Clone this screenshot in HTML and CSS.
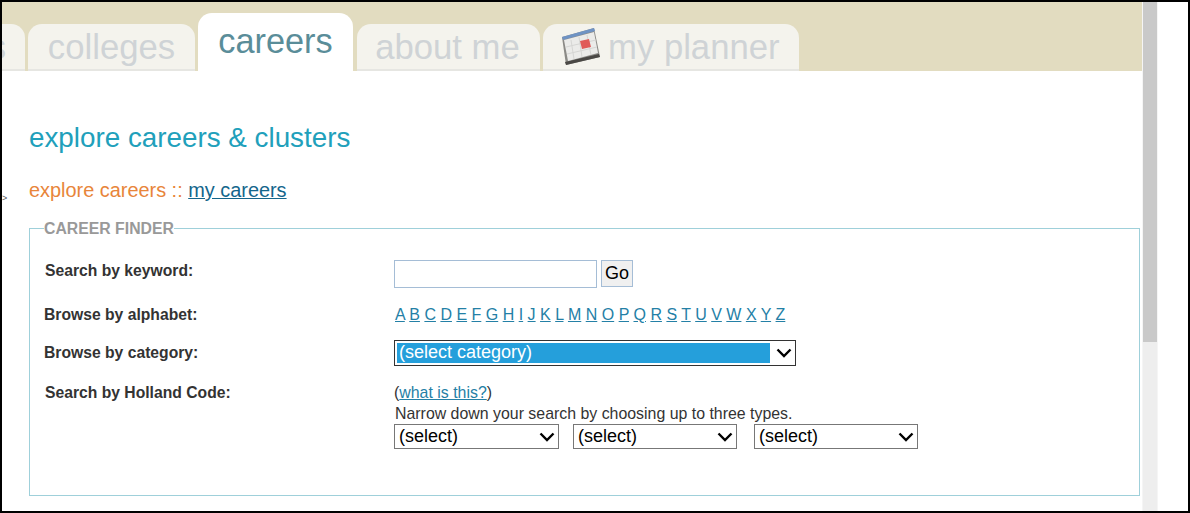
FILE: index.html
```html
<!DOCTYPE html>
<html lang="en">
<head>
    <meta charset="UTF-8">
    <meta name="viewport" content="width=device-width, initial-scale=1.0">
    <title>Explore Careers &amp; Clusters</title>
    <link rel="stylesheet" href="styles.css">
</head>
<body>
    <div class="page">
        <header class="tabbar">
            <a class="tab tab-cut" href="#"><span>s</span></a>
            <a class="tab tab-colleges" href="#">colleges</a>
            <a class="tab tab-active" href="#">careers</a>
            <a class="tab tab-about" href="#">about me</a>
            <a class="tab tab-planner" href="#">
                <svg class="planner-icon" width="40" height="38" viewBox="0 0 40 38">
                    <polygon points="1,9 33,0 39,29 5,37" fill="#8b8a86"/>
                    <polygon points="4,34 38,26 39,29 5,37" fill="#4a4845"/>
                    <polygon points="1,9 33,0 34,3 2,12" fill="#6f93c4"/>
                    <polygon points="3,12 33,4 37,25 7,33" fill="#ebebe9"/>
                    <path d="M10 12 L13 31 M18 9 L21 29 M26 7 L30 27 M5 19 L35 12 M6 26 L36 19" stroke="#d6d6d4" stroke-width="1" fill="none"/>
                    <polygon points="19,13 28,11 30,19 21,21" fill="#e05a58"/>
                </svg>
                my planner
            </a>
        </header>

        <main class="content">
            <h1 class="page-title">explore careers &amp; clusters</h1>
            <p class="subnav"><span class="subnav-current">explore careers :: </span><a href="#">my careers</a></p>
            <span class="stray">&gt;</span>

            <fieldset class="finder">
                <legend>CAREER FINDER</legend>

                <div class="row row-keyword">
                    <label class="row-label nudge">Search by keyword:</label>
                    <div class="keyword-controls">
                        <input type="text" class="keyword-input">
                        <button type="button" class="go-btn">Go</button>
                    </div>
                </div>

                <div class="row row-alpha">
                    <label class="row-label">Browse by alphabet:</label>
                    <div class="alphabet">
                        <a href="#">A</a> <a href="#">B</a> <a href="#">C</a> <a href="#">D</a> <a href="#">E</a> <a href="#">F</a> <a href="#">G</a> <a href="#">H</a> <a href="#">I</a> <a href="#">J</a> <a href="#">K</a> <a href="#">L</a> <a href="#">M</a> <a href="#">N</a> <a href="#">O</a> <a href="#">P</a> <a href="#">Q</a> <a href="#">R</a> <a href="#">S</a> <a href="#">T</a> <a href="#">U</a> <a href="#">V</a> <a href="#">W</a> <a href="#">X</a> <a href="#">Y</a> <a href="#">Z</a>
                    </div>
                </div>

                <div class="row row-category">
                    <label class="row-label">Browse by category:</label>
                    <div class="select-box select-category">
                        <span class="select-value">(select category)</span>
                        <svg class="chevron" width="16" height="10" viewBox="0 0 16 10"><path d="M1.5 1.5 L8 8 L14.5 1.5" fill="none" stroke="#000" stroke-width="2.4"/></svg>
                    </div>
                </div>

                <div class="row row-holland">
                    <label class="row-label nudge">Search by Holland Code:</label>
                    <div class="holland">
                        <div class="holland-help">(<a href="#">what is this?</a>)</div>
                        <div class="holland-note">Narrow down your search by choosing up to three types.</div>
                        <div class="holland-selects">
                            <div class="select-box select-small">
                                <span class="select-value">(select)</span>
                                <svg class="chevron" width="16" height="10" viewBox="0 0 16 10"><path d="M1.5 1.5 L8 8 L14.5 1.5" fill="none" stroke="#000" stroke-width="2.4"/></svg>
                            </div>
                            <div class="select-box select-small">
                                <span class="select-value">(select)</span>
                                <svg class="chevron" width="16" height="10" viewBox="0 0 16 10"><path d="M1.5 1.5 L8 8 L14.5 1.5" fill="none" stroke="#000" stroke-width="2.4"/></svg>
                            </div>
                            <div class="select-box select-small">
                                <span class="select-value">(select)</span>
                                <svg class="chevron" width="16" height="10" viewBox="0 0 16 10"><path d="M1.5 1.5 L8 8 L14.5 1.5" fill="none" stroke="#000" stroke-width="2.4"/></svg>
                            </div>
                        </div>
                    </div>
                </div>
            </fieldset>
        </main>

        <div class="scrollbar"><div class="scroll-thumb"></div></div>
        <div class="page-edge"></div>
    </div>
</body>
</html>
```

FILE: styles.css
```css
html, body {
    margin: 0;
    padding: 0;
    height: 100%;
}
body {
    font-family: "Liberation Sans", Arial, sans-serif;
    background: #fff;
    overflow: hidden;
}
.page {
    box-sizing: border-box;
    width: 1190px;
    height: 513px;
    border: 2px solid #000;
    display: grid;
    grid-template-columns: 1140px 16px 1fr;
    grid-template-rows: 69px 1fr;
    overflow: hidden;
}

/* tabs */
.tabbar {
    grid-column: 1;
    grid-row: 1;
    background: #e2dcc0;
    display: flex;
    align-items: flex-end;
    overflow: hidden;
}
.tab {
    box-sizing: border-box;
    height: 47px;
    margin-right: 3px;
    border-radius: 14px 14px 0 0;
    border-bottom: 2px solid #e6e6e2;
    background: #f4f3ed;
    color: #cfd3d6;
    font-size: 34.7px;
    line-height: 46px;
    text-align: center;
    text-decoration: none;
    white-space: nowrap;
}
.tab-cut {
    width: 23px;
    display: flex;
    justify-content: flex-end;
    overflow: hidden;
    border-radius: 0 14px 0 0;
    padding-right: 19px;
}
.tab-cut span {
    flex: none;
}
.tab-colleges {
    width: 167px;
}
.tab-active {
    width: 155px;
    height: 58px;
    margin-right: 4px;
    border-bottom: 0;
    background: #fff;
    color: #5a8d99;
    font-size: 34.3px;
    line-height: 56px;
}
.tab-about {
    width: 183px;
    padding-right: 2px;
}
.tab-planner {
    width: 256px;
    display: flex;
    align-items: center;
    padding-left: 18px;
    gap: 7px;
}
.planner-icon {
    flex: none;
    filter: blur(0.5px);
    margin-top: 1px;
}

/* content */
.content {
    grid-column: 1;
    grid-row: 2;
    position: relative;
    padding: 0 2px 0 27px;
}
.page-title {
    margin: 51px 0 0;
    font-size: 27.8px;
    line-height: 32px;
    font-weight: normal;
    color: #21a0bb;
}
.subnav {
    margin: 25px 0 0;
    font-size: 19.9px;
    line-height: 22px;
}
.subnav-current {
    color: #e8853a;
}
.subnav a {
    color: #14668c;
}
.stray {
    position: absolute;
    left: 0;
    top: 122px;
    font-size: 9px;
    color: #555;
}
.finder {
    box-sizing: border-box;
    height: 278px;
    margin: 17px 0 0;
    padding: 0 14px;
    border: 1px solid #9fd0da;
    min-width: 0;
}
.finder legend {
    padding: 2px 0 0;
    font-size: 15.8px;
    line-height: 18px;
    font-weight: bold;
    color: #999;
}

/* rows */
.row {
    display: grid;
    grid-template-columns: 350px 1fr;
    color: #333;
}
.row-label {
    font-size: 15.7px;
    font-weight: bold;
    line-height: 18px;
}
.nudge {
    padding-left: 1px;
}
.row-keyword {
    margin-top: 22px;
    height: 46px;
}
.row-keyword .row-label {
    padding-top: 2px;
}
.keyword-controls {
    display: flex;
    align-items: flex-start;
    gap: 4px;
}
.keyword-input {
    box-sizing: border-box;
    width: 203px;
    height: 28px;
    margin: 0;
    border: 1px solid #a5bdd6;
    background: #fff;
}
.go-btn {
    box-sizing: border-box;
    width: 32px;
    height: 27px;
    padding: 0;
    border: 1px solid #a5bdd6;
    background: #f0f0f0;
    color: #000;
    font: 18px "Liberation Sans", Arial, sans-serif;
}
.row-alpha {
    height: 34px;
}
.alphabet {
    padding-left: 1px;
    font-size: 16px;
    line-height: 18px;
}
.alphabet a {
    color: #2480a6;
}
.row-category {
    height: 44px;
}
.row-category .row-label {
    padding-top: 4px;
}
.select-box {
    box-sizing: border-box;
    display: flex;
    align-items: center;
    justify-content: space-between;
    background: #fff;
    color: #000;
    font-size: 18px;
}
.select-category {
    width: 402px;
    height: 26px;
    border: 1px solid #333;
    padding: 2px 3px 2px 2px;
}
.select-category .select-value {
    flex: 0 0 373px;
    box-sizing: border-box;
    height: 20px;
    padding-left: 2px;
    background: #259fdb;
    color: #fff;
    line-height: 18px;
}
.holland {
    font-size: 15.9px;
    line-height: 18px;
}
.holland-help a {
    color: #2480a6;
}
.holland-note {
    margin-top: 3px;
    padding-left: 1px;
}
.holland-selects {
    display: flex;
    gap: 14px;
    margin-top: 1px;
}
.holland-selects .select-box:last-child {
    margin-left: 3px;
}
.select-small {
    width: 165px;
    height: 25px;
    border: 1px solid #777;
    padding: 0 3px 0 4px;
}
.select-small .select-value {
    margin-top: -2px;
}
.select-small + .select-small {
    width: 164px;
}

/* scrollbar */
.scrollbar {
    grid-column: 2;
    grid-row: 1 / span 2;
    background: #eee;
    border-left: 1px solid #f5f5f5;
    border-right: 1px solid #f5f5f5;
    box-sizing: border-box;
}
.scroll-thumb {
    height: 340px;
    background: #c9c9c9;
}
.page-edge {
    grid-column: 3;
    grid-row: 1 / span 2;
    background: #fff;
}
```
